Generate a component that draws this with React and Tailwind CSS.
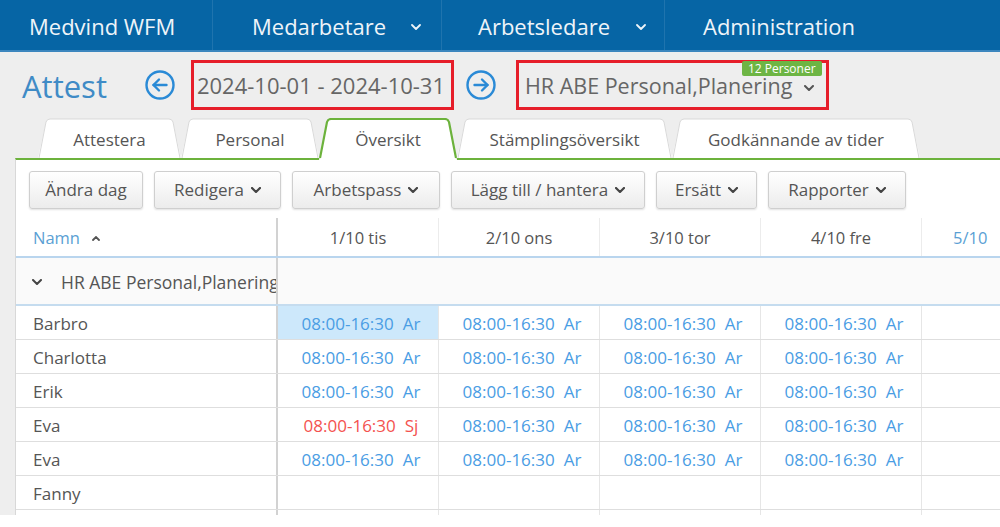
import React from "react";

const Chev = ({ className = "", color = "currentColor", w = 10, h = 6, sw = 2 }) => (
  <svg width={w} height={h} viewBox="0 0 10 6" className={`shrink-0 ${className}`} fill="none">
    <polyline points="1,1 5,5 9,1" stroke={color} strokeWidth={sw} strokeLinecap="round" strokeLinejoin="round" />
  </svg>
);

const CircleArrow = ({ dir = "left" }) => (
  <svg width="32" height="32" viewBox="0 0 32 32" fill="none">
    <circle cx="16" cy="16" r="13.5" stroke="#2a8ad6" strokeWidth="2.4" />
    {dir === "left" ? (
      <g stroke="#2a8ad6" strokeWidth="2.4" strokeLinecap="round" strokeLinejoin="round">
        <line x1="9.5" y1="16" x2="22.5" y2="16" />
        <polyline points="15,10.5 9.5,16 15,21.5" />
      </g>
    ) : (
      <g stroke="#2a8ad6" strokeWidth="2.4" strokeLinecap="round" strokeLinejoin="round">
        <line x1="9.5" y1="16" x2="22.5" y2="16" />
        <polyline points="17,10.5 22.5,16 17,21.5" />
      </g>
    )}
  </svg>
);

function Tab({ label, w, active }) {
  const s = 8;
  const h = 40;
  const outline = `M1,${h} L${s},4 Q${s + 1},1 ${s + 4},1 L${w - s - 4},1 Q${w - s - 1},1 ${w - s},4 L${w - 1},${h}`;
  return (
    <div className={`relative flex items-center justify-center ${active ? "h-[42px] z-10" : "h-[40px]"}`} style={{ width: w }}>
      <svg width={w} height={active ? 42 : 40} className="absolute left-0 top-0" fill="none">
        <path d={`M0,${active ? 42 : h} L${s},4 Q${s + 1},1 ${s + 4},1 L${w - s - 4},1 Q${w - s - 1},1 ${w - s},4 L${w},${active ? 42 : h} Z`} fill="#ffffff" />
        <path d={outline} stroke={active ? "#6cb23c" : "#d9d9d9"} strokeWidth={active ? 2.2 : 1} fill="none" />
      </svg>
      <span className={`relative text-[17px] text-[#555] ${active ? "mt-[2px]" : "mt-[4px]"}`}>{label}</span>
    </div>
  );
}

function Btn({ label, w, chevron }) {
  return (
    <div
      className="flex h-[38px] items-center justify-center gap-[7px] rounded-[3px] border border-[#cfcfcf] bg-gradient-to-b from-[#ffffff] to-[#ececec] text-[17px] text-[#555] shadow-[0_1px_2px_rgba(0,0,0,0.12)]"
      style={{ width: w }}
    >
      <span>{label}</span>
      {chevron && <Chev color="#444" w={10} h={6} sw={2.2} />}
    </div>
  );
}

const rows = [
  { name: "Barbro", cells: ["ar", "ar", "ar", "ar"], hl: true },
  { name: "Charlotta", cells: ["ar", "ar", "ar", "ar"] },
  { name: "Erik", cells: ["ar", "ar", "ar", "ar"] },
  { name: "Eva", cells: ["sj", "ar", "ar", "ar"] },
  { name: "Eva", cells: ["ar", "ar", "ar", "ar"] },
  { name: "Fanny", cells: [null, null, null, null] },
  { name: "", cells: [null, null, null, null] },
];

const cols = "grid grid-cols-[262px_161px_161px_161px_161px_161px]";

export default function App() {
  return (
    <div className="flex h-[527px] w-[1000px] flex-col overflow-hidden bg-[#eeeeee] font-['Open_Sans',sans-serif]">
      {/* Top nav */}
      <div className="flex h-[52px] shrink-0 border-b-2 border-[#3c86be] bg-[#0665a5] text-[22px] text-[#eef4f9]">
        <div className="flex w-[213px] items-center border-r border-[#1f74ae] pl-[29px] pt-[3px]">Medvind WFM</div>
        <div className="flex w-[229px] items-center border-r border-[#1f74ae] pl-[39px] pt-[3px]">
          <span>Medarbetare</span>
          <Chev className="ml-[25px]" color="#eef4f9" w={10} h={6} sw={1.8} />
        </div>
        <div className="flex w-[223px] items-center border-r border-[#1f74ae] pl-[36px] pt-[3px]">
          <span>Arbetsledare</span>
          <Chev className="ml-[26px]" color="#eef4f9" w={10} h={6} sw={1.8} />
        </div>
        <div className="flex items-center pl-[38px] pt-[3px]">Administration</div>
      </div>

      {/* Header */}
      <div className="flex h-[66px] shrink-0 items-center">
        <div className="ml-[22px] mt-[3px] text-[31px] text-[#3f8bc6]">Attest</div>
        <div className="ml-[37px] flex items-center">
          <CircleArrow dir="left" />
        </div>
        <div className="ml-[15px] flex h-[50px] w-[263px] items-center border-[3px] border-[#e61e2a] pl-[3px] pt-[1px] text-[22px] text-[#666]">
          2024-10-01 - 2024-10-31
        </div>
        <div className="ml-[11px] flex items-center">
          <CircleArrow dir="right" />
        </div>
        <div className="relative ml-[19px] flex h-[50px] w-[313px] items-center border-[3px] border-[#e61e2a] pl-[6px] pt-[2px] text-[21.5px] text-[#666]">
          <span>HR ABE Personal,Planering</span>
          <Chev className="ml-[12px] mt-[4px]" color="#555" w={10} h={6} sw={2} />
          <div className="absolute left-[223px] top-[-2px] flex h-[15px] items-center rounded-[2px] bg-[#6db544] px-[6px] text-[12px] leading-none text-white">
            12 Personer
          </div>
        </div>
      </div>

      {/* Tabs */}
      <div className="relative z-10 flex h-[40px] shrink-0 items-start pl-[38px]">
        <Tab label="Attestera" w={143} />
        <Tab label="Personal" w={138} />
        <Tab label="Översikt" w={138} active />
        <Tab label="Stämplingsöversikt" w={215} />
        <Tab label="Godkännande av tider" w={248} />
      </div>

      {/* Panel */}
      <div className="ml-[15px] flex min-h-0 flex-1 flex-col overflow-hidden border-l border-t-2 border-l-[#d8d8d8] border-t-[#6cb23c] bg-white">
        <div className="flex shrink-0 gap-[11px] pb-[9px] pl-[13px] pt-[11px]">
          <Btn label="Ändra dag" w={114} />
          <Btn label="Redigera" w={127} chevron />
          <Btn label="Arbetspass" w={148} chevron />
          <Btn label="Lägg till / hantera" w={194} chevron />
          <Btn label="Ersätt" w={101} chevron />
          <Btn label="Rapporter" w={138} chevron />
        </div>

        {/* Table header */}
        <div className={`${cols} h-[40px] shrink-0 border-b-2 border-[#b9d5ee] text-[16.5px]`}>
          <div className="flex items-center gap-[12px] border-r-2 border-[#d2d2d2] pl-[17px] pt-[3px] text-[#5a9fd4]">
            <span>Namn</span>
            <svg width="8" height="5" viewBox="0 0 8 5" fill="none">
              <polyline points="1,4 4,1 7,4" stroke="#555" strokeWidth="1.8" strokeLinecap="round" />
            </svg>
          </div>
          {["1/10 tis", "2/10 ons", "3/10 tor", "4/10 fre"].map((d) => (
            <div key={d} className="flex items-center justify-center border-r border-[#ececec] pt-[3px] text-[#555]">
              {d}
            </div>
          ))}
          <div className="flex items-center pl-[31px] pt-[3px] text-[#5a9fd4] whitespace-nowrap">5/10</div>
        </div>

        {/* Group row */}
        <div className={`${cols} h-[48px] shrink-0 border-b-2 border-[#c5dcef] bg-[#fafafa]`}>
          <div className="flex items-center overflow-hidden whitespace-nowrap border-r-2 border-[#d2d2d2] pl-[16px] pt-[2px] text-[17.5px] text-[#555]">
            <Chev color="#444" w={10} h={6} sw={2} />
            <span className="ml-[19px]">HR ABE Personal,Planering</span>
          </div>
          <div className="col-span-5" />
        </div>

        {/* Data rows */}
        {rows.map((r, i) => (
          <div key={i} className={`${cols} h-[34px] shrink-0 border-b border-[#dedede] text-[17px]`}>
            <div className="flex items-center border-r-2 border-[#d2d2d2] pl-[17px] pt-[2px] text-[#555]">{r.name}</div>
            {r.cells.map((c, j) => (
              <div
                key={j}
                className={`flex items-center justify-center gap-[9px] border-r border-[#e6e6e6] pl-[6px] pt-[2px] text-[17px] ${
                  c === "sj" ? "text-[#f4524f]" : "text-[#4a9de4]"
                } ${r.hl && j === 0 ? "bg-[#cde8fb]" : ""}`}
              >
                {c && (
                  <>
                    <span>08:00-16:30</span>
                    <span>{c === "sj" ? "Sj" : "Ar"}</span>
                  </>
                )}
              </div>
            ))}
            <div />
          </div>
        ))}
      </div>
      <div className="h-[12px] shrink-0 bg-white" />
    </div>
  );
}
